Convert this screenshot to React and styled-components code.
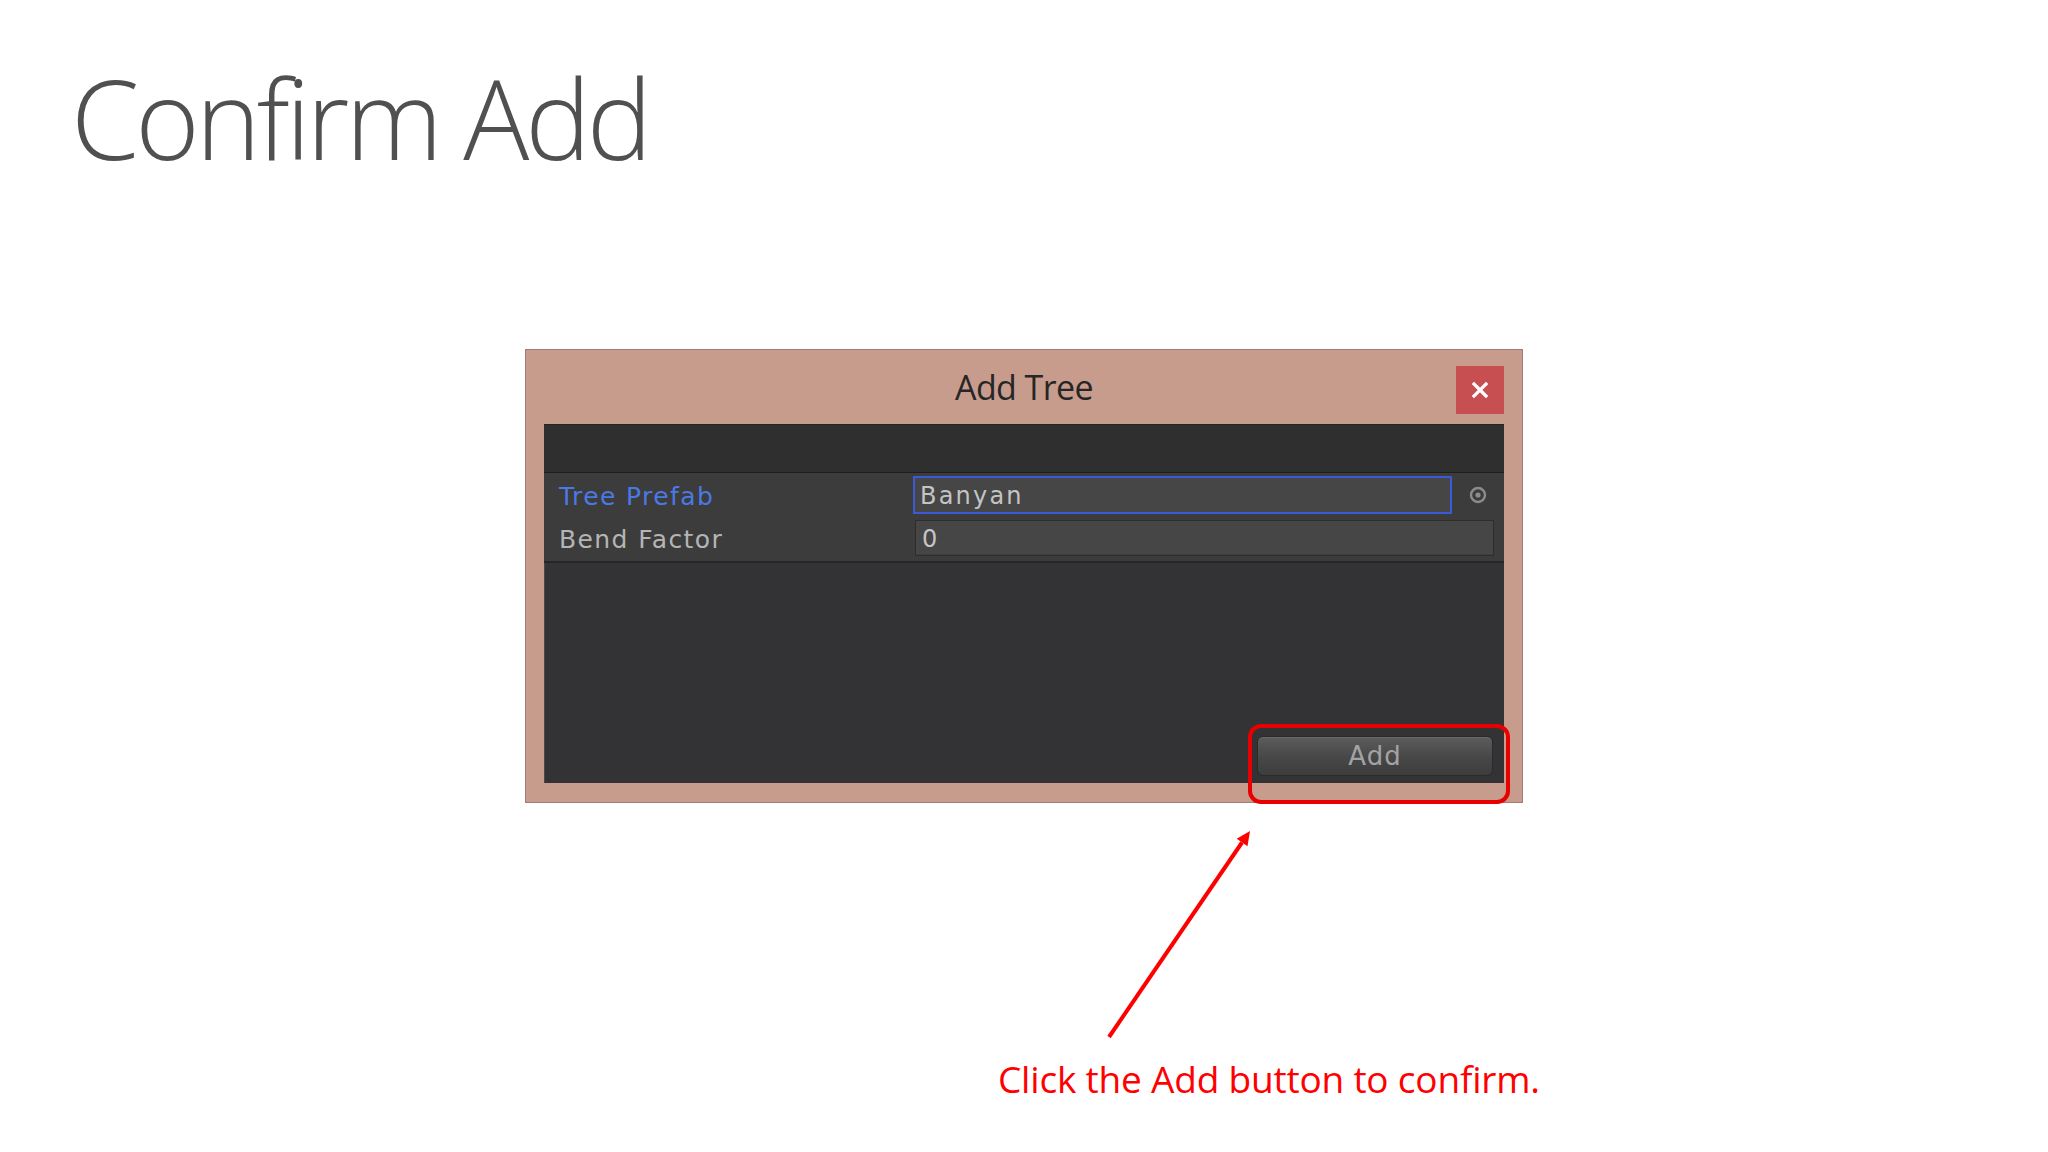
import React from 'react';
import styled, { createGlobalStyle } from 'styled-components';

const GlobalStyle = createGlobalStyle`
  html, body {
    margin: 0;
    padding: 0;
    background: #ffffff;
  }
  body {
    font-family: "Open Sans", "Noto Sans", sans-serif;
  }
`;

const Slide = styled.div`
  position: relative;
  width: 2048px;
  height: 1152px;
  display: flex;
  flex-direction: column;
  background: #ffffff;
  overflow: hidden;
`;

const Title = styled.h1`
  margin: 62px 0 0 71px;
  font-family: "Open Sans", "Noto Sans", sans-serif;
  font-weight: 300;
  font-size: 110px;
  line-height: 110px;
  letter-spacing: -4px;
  color: #505050;
`;

const Dialog = styled.div`
  align-self: center;
  margin-top: 177px;
  width: 998px;
  height: 454px;
  box-sizing: border-box;
  display: flex;
  flex-direction: column;
  background: #c89c8d;
  border: 1px solid #a27a76;
  padding: 0 18px 19px 18px;
`;

const DialogHeader = styled.div`
  display: grid;
  grid-template-columns: 48px 1fr 48px;
  align-items: start;
  height: 74px;
  padding-top: 16px;
  box-sizing: border-box;
`;

const DialogTitle = styled.div`
  grid-column: 2;
  margin-top: 4px;
  text-align: center;
  font-family: "Open Sans", "Noto Sans", sans-serif;
  font-size: 34px;
  line-height: 34px;
  letter-spacing: -0.6px;
  color: #262626;
`;

const CloseButton = styled.button`
  grid-column: 3;
  width: 48px;
  height: 48px;
  padding: 0;
  border: none;
  background: #c84f51;
  display: flex;
  align-items: center;
  justify-content: center;
  cursor: pointer;
`;

const Panel = styled.div`
  flex: 1;
  display: flex;
  flex-direction: column;
  background: #333234;
  box-shadow: inset 1px 0 0 #4a4a4a;
`;

const TopBand = styled.div`
  height: 47px;
  background: #2f2f2f;
  border-top: 1px solid #262626;
  border-bottom: 1px solid #1e1e1e;
`;

const Fields = styled.div`
  display: flex;
  flex-direction: column;
  gap: 6px;
  padding: 3px 0 5px 15px;
  background: #3c3c3c;
  border-bottom: 2px solid #262626;
`;

const Row = styled.div`
  display: flex;
  align-items: center;
  height: ${(p) => (p.$tall ? 38 : 36)}px;
`;

const Label = styled.div`
  width: 354px;
  flex-shrink: 0;
  padding-top: 2px;
  font-family: "DejaVu Sans", "Liberation Sans", sans-serif;
  font-size: 25px;
  letter-spacing: 1.4px;
  color: ${(p) => (p.$active ? '#4a79e4' : '#b5b5b5')};
`;

const Field = styled.div`
  flex: 1;
  height: 100%;
  box-sizing: border-box;
  display: flex;
  align-items: center;
  padding-top: 2px;
  padding-left: ${(p) => (p.$focused ? 5 : 6)}px;
  margin-left: ${(p) => (p.$focused ? 0 : 2)}px;
  background: #464646;
  border: ${(p) => (p.$focused ? '2px solid #3b5bd6' : '1px solid #2d2d2d')};
  box-shadow: ${(p) => (p.$focused ? 'none' : 'inset 0 -1px 0 #3f3f3f')};
  font-family: "DejaVu Sans", "Liberation Sans", sans-serif;
  font-size: 24px;
  letter-spacing: 2.2px;
  color: #c4c4c4;
`;

const Trailing = styled.div`
  width: ${(p) => p.$width}px;
  flex-shrink: 0;
  display: flex;
  align-items: center;
  justify-content: center;
`;

const Footer = styled.div`
  flex: 1;
  display: flex;
  align-items: flex-end;
  justify-content: flex-end;
  padding: 0 11px 7px 0;
`;

const ButtonWrap = styled.div`
  position: relative;
`;

const AddButton = styled.button`
  width: 236px;
  height: 40px;
  box-sizing: border-box;
  border: 1px solid #2a2a2a;
  border-radius: 6px;
  background: linear-gradient(#5c5c5c, #474747 55%, #3d3d3d);
  box-shadow: inset 0 1px 0 #6a6a6a;
  font-family: "DejaVu Sans", "Liberation Sans", sans-serif;
  font-size: 26px;
  letter-spacing: 1px;
  color: #a3a3a3;
  padding: 0;
  cursor: pointer;
`;

const Highlight = styled.div`
  position: absolute;
  top: -12px;
  left: -9px;
  right: -17px;
  bottom: -28px;
  border: 4px solid #e80000;
  border-radius: 13px;
  pointer-events: none;
`;

const Arrow = styled.svg`
  position: absolute;
  left: 1100px;
  top: 825px;
  overflow: visible;
`;

const Caption = styled.p`
  margin: 257px 0 0 998px;
  font-family: "Open Sans", "Noto Sans", sans-serif;
  font-size: 37px;
  line-height: 37px;
  letter-spacing: -0.2px;
  color: #ff0000;
`;

const CloseIcon = () => (
  <svg width="18" height="18" viewBox="0 0 18 18">
    <path d="M3 3 L15 15 M15 3 L3 15" stroke="#ffffff" strokeWidth="3.2" strokeLinecap="square" />
  </svg>
);

const TargetIcon = () => (
  <svg width="20" height="20" viewBox="0 0 20 20">
    <circle cx="10" cy="10" r="7" fill="none" stroke="#8c8c8c" strokeWidth="2.4" />
    <circle cx="10" cy="10" r="2.6" fill="#8c8c8c" />
  </svg>
);

const App = () => {
  return (
    <>
      <GlobalStyle />
      <Slide>
        <Title>Confirm Add</Title>
        <Dialog>
          <DialogHeader>
            <DialogTitle>Add Tree</DialogTitle>
            <CloseButton aria-label="Close">
              <CloseIcon />
            </CloseButton>
          </DialogHeader>
          <Panel>
            <TopBand />
            <Fields>
              <Row $tall>
                <Label $active>Tree Prefab</Label>
                <Field $focused>Banyan</Field>
                <Trailing $width={52}>
                  <TargetIcon />
                </Trailing>
              </Row>
              <Row>
                <Label>Bend Factor</Label>
                <Field>0</Field>
                <Trailing $width={10} />
              </Row>
            </Fields>
            <Footer>
              <ButtonWrap>
                <AddButton>Add</AddButton>
                <Highlight />
              </ButtonWrap>
            </Footer>
          </Panel>
        </Dialog>
        <Caption>Click the Add button to confirm.</Caption>
        <Arrow width="160" height="220" viewBox="0 0 160 220">
          <line x1="9" y1="212" x2="142" y2="17.5" stroke="#ff0000" strokeWidth="4" />
          <polygon points="150,6 147.5,21.3 136.7,13.8" fill="#ff0000" />
        </Arrow>
      </Slide>
    </>
  );
};

export default App;
